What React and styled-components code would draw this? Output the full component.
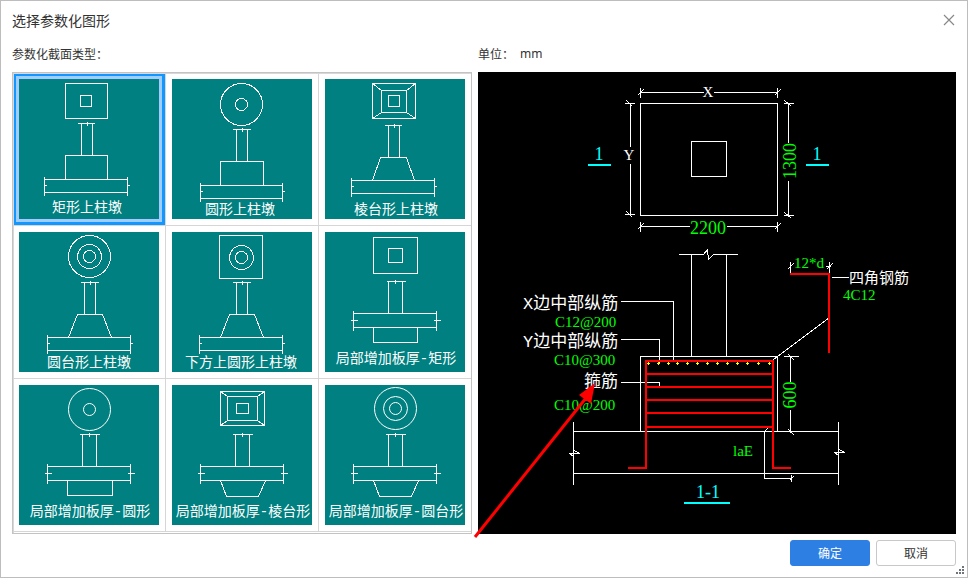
import React, { useState } from "react";
import styled, { createGlobalStyle } from "styled-components";

const GlobalStyle = createGlobalStyle`
  body {
    margin: 0;
    background: #fff;
    font-family: "Noto Sans", "Noto Sans CJK SC", sans-serif;
    font-size: 12px;
    color: #333;
  }
  * {
    box-sizing: border-box;
  }
`;

/* every coordinate is a pixel of the 140 x 140 thumbnail */
const sections = [
  {
    name: "矩形上柱墩",
    rects: [[46, 4, 88, 39], [61, 16, 72, 27]],
    circles: [],
    column: { cap: [58, 75], x: [62, 73], y: [44, 76] },
    block: [46, 88, 88, 46, 76, 100],
    slab: [25, 108, 100, 113],
    text: [68, 133],
  },
  {
    name: "圆形上柱墩",
    rects: [],
    circles: [[69, 25, 21], [69, 25, 6]],
    column: { cap: [60, 78], x: [64, 75], y: [50, 82] },
    block: [48, 91, 91, 48, 82, 106],
    slab: [28, 110, 106, 119],
    text: [68, 135],
  },
  {
    name: "棱台形上柱墩",
    rects: [[47, 4, 90, 39], [56, 11, 81, 33], [63, 16, 74, 27]],
    circles: [],
    slopes: true,
    column: { cap: [59, 76], x: [63, 74], y: [46, 78] },
    block: [55, 81, 89, 47, 78, 101],
    slab: [26, 109, 101, 114],
    text: [71, 135],
  },
  {
    name: "圆台形上柱墩",
    rects: [],
    circles: [[70, 24, 21], [70, 24, 12], [70, 24, 6]],
    column: { cap: [61, 79], x: [65, 76], y: [50, 82] },
    block: [58, 83, 92, 49, 82, 105],
    slab: [28, 111, 105, 118],
    text: [70, 135],
  },
  {
    name: "下方上圆形上柱墩",
    rects: [[47, 3, 90, 46]],
    circles: [[69, 25, 12], [69, 25, 6]],
    column: { cap: [60, 78], x: [64, 75], y: [50, 82] },
    block: [57, 82, 91, 48, 82, 105],
    slab: [27, 110, 105, 118],
    text: [69, 135],
  },
  {
    name: "局部增加板厚-矩形",
    rects: [[48, 5, 92, 41], [63, 16, 77, 30]],
    circles: [],
    column: { cap: [61, 80], x: [63, 77], y: [49, 81] },
    block: [48, 92, 92, 48, 95, 110],
    slab: [28, 111, 81, 95],
    text: [71, 131],
  },
  {
    name: "局部增加板厚-圆形",
    rects: [],
    circles: [[70, 24, 21], [70, 24, 6]],
    smooth: true,
    column: { cap: [60, 80], x: [63, 77], y: [49, 81] },
    block: [48, 93, 93, 48, 95, 110],
    slab: [28, 111, 81, 95],
    text: [71, 131],
  },
  {
    name: "局部增加板厚-棱台形",
    rects: [[48, 6, 92, 40], [55, 11, 85, 35], [64, 18, 76, 28]],
    circles: [],
    slopes: true,
    column: { cap: [60, 80], x: [63, 77], y: [49, 81] },
    block: [48, 93, 86, 54, 95, 111],
    slab: [28, 111, 81, 95],
    text: [71, 131],
  },
  {
    name: "局部增加板厚-圆台形",
    rects: [],
    circles: [[70, 23, 21], [70, 23, 12], [70, 23, 6]],
    smooth: true,
    column: { cap: [60, 80], x: [63, 77], y: [49, 81] },
    block: [48, 93, 86, 54, 95, 111],
    slab: [28, 111, 81, 95],
    text: [71, 131],
  },
];

const SectionThumb = ({ section }) => {
  const { name, rects, circles, slopes, smooth, column, block, slab, text } = section;
  const [bx1, bx2, bx3, bx4, by1, by2] = block;
  const [sx1, sx2, sy1, sy2] = slab;
  const [outer, middle] = rects;
  const mid = Math.round((column.x[0] + column.x[1]) / 2);
  const sMid = Math.floor((sy1 + sy2) / 2);
  const arm = by1 > sy1 ? 3 : 1;

  return (
    <Thumb viewBox="0 0 140 140">
      <g transform="translate(.5 .5)" shapeRendering="crispEdges">
        {rects.map(([x1, y1, x2, y2]) => (
          <path key={x1} d={`M${x1} ${y1}H${x2}V${y2}H${x1}Z`} />
        ))}
        {slopes && (
          <path
            d={`M${outer[0]} ${outer[1]}L${middle[0]} ${middle[1]}
              M${outer[2]} ${outer[1]}L${middle[2]} ${middle[1]}
              M${outer[0]} ${outer[3]}L${middle[0]} ${middle[3]}
              M${outer[2]} ${outer[3]}L${middle[2]} ${middle[3]}`}
          />
        )}
        {circles.map(([cx, cy, r]) => (
          <circle
            key={r}
            cx={cx}
            cy={cy}
            r={r}
            shapeRendering={smooth ? "auto" : "crispEdges"}
          />
        ))}
        <path
          d={`M${column.cap[0]} ${column.y[0]}H${column.cap[1]}
            M${column.x[0]} ${column.y[0]}V${column.y[1]}
            M${column.x[1]} ${column.y[0]}V${column.y[1]}
            M${mid} ${column.y[0] - 2}V${column.y[0] + 2}`}
        />
        <path d={`M${bx1} ${by1}H${bx2}L${bx3} ${by2}H${bx4}Z`} />
        <path
          d={`M${sx1} ${sy1}H${sx2}M${sx1} ${sy2}H${sx2}
            M${sx1} ${sy1 - 3}V${sy2 + 3}M${sx2} ${sy1 - 3}V${sy2 + 3}
            M${sx1 - arm} ${sMid}H${sx1 + arm + 1}
            M${sx2 - arm} ${sMid}H${sx2 + arm + 1}`}
        />
      </g>
      <text x={text[0]} y={text[1]} textAnchor="middle">
        {name}
      </text>
    </Thumb>
  );
};

const barDots = [648, 658, 668, 677, 687, 697, 707, 717, 727, 737, 747, 758, 769];
const stirrups = [374, 387, 400, 413, 427];

/* the detail drawing keeps the coordinates of the dialog */
const DetailDrawing = () => (
  <Drawing viewBox="478 72 478 462">
    <g className="white" transform="translate(.5 .5)" shapeRendering="crispEdges">
      {/* plan */}
      <path d="M640 103H777V215H640ZM691 141H726V176H691Z" />
      <path d="M640 92H703M713 92H777M640 87V97M777 87V97M637 95L643 89M774 95L780 89" />
      <path d="M640 226H689M726 226H777M640 221V231M777 221V231M637 229L643 223M774 229L780 223" />
      <path d="M630 103V146M630 163V214M624 103H634M624 214H634M626 100L632 106M626 211L632 217" />
      <path d="M788 103V142M788 180V215M783 103H793M783 215H793M784 100L791 106M784 212L791 218" />
      {/* section */}
      <path d="M678 254H703L707 249L708 259L713 254H737M691 254V356M726 254V356" />
      <path d="M640 431V356H777V431" />
      <path d="M573 431H838M573 473H838M573 421V484M838 421V484" />
      <path d="M569 453H579L574 450M569 453L573 456M834 452H844L839 449M834 452L838 455" />
      <path d="M620 301H673V361M620 339H659V362M620 382H659V386" />
      <path d="M790 261V272M829 261V272M787 269L793 263M826 269L832 263M825 266H830" />
      <path d="M831 277H848M829 317L769 362" />
      <path d="M783 356H798M790 356V381M790 409V432M788 354L794 360M788 429L794 435" />
      <path d="M764 431V478H791M791 474V481M763 432L767 428M789 480L793 476" />
    </g>

    <g className="rebar" shapeRendering="crispEdges">
      <path d="M628 468H646V361H773V468H791" />
      {stirrups.map((y) => (
        <path key={y} d={`M646 ${y}H773`} />
      ))}
      <path d="M790 274H829V353" />
    </g>
    <g className="dots" shapeRendering="crispEdges">
      {barDots.map((x) => (
        <path key={x} d={`M${x - 1} 363.5h3M${x + 0.5} 362v3`} />
      ))}
    </g>
    <path className="mark" d="M588 165H611M806 165H829M684 503H730" />

    <g className="label">
      <text x="708" y="97" fontSize="15" textAnchor="middle">X</text>
      <text x="629" y="160" fontSize="15" textAnchor="middle">Y</text>
      <text className="note" x="523" y="309" fontSize="17">X边中部纵筋</text>
      <text className="note" x="523" y="347" fontSize="17">Y边中部纵筋</text>
      <text className="note" x="584" y="387" fontSize="17">箍筋</text>
      <text className="note" x="849" y="283" fontSize="15">四角钢筋</text>
    </g>
    <g className="value">
      <text x="708" y="234" fontSize="18" textAnchor="middle">2200</text>
      <text transform="translate(796 161) rotate(-90)" fontSize="18" textAnchor="middle">1300</text>
      <text transform="translate(796 395) rotate(-90)" fontSize="18" textAnchor="middle">600</text>
      <text x="555" y="327" fontSize="15">C12@200</text>
      <text x="554" y="365" fontSize="15">C10@300</text>
      <text x="554" y="410" fontSize="15">C10@200</text>
      <text x="809" y="268" fontSize="15" textAnchor="middle">12*d</text>
      <text x="843" y="300" fontSize="15">4C12</text>
      <text x="733" y="456" fontSize="15">laE</text>
    </g>
    <g className="section-no">
      <text x="599" y="160" fontSize="18" textAnchor="middle">1</text>
      <text x="817" y="160" fontSize="18" textAnchor="middle">1</text>
      <text x="708" y="498" fontSize="18" textAnchor="middle">1-1</text>
    </g>

    <path d="M475 537L586 398" stroke="#f00" strokeWidth="3" />
    <path d="M595 383L579 395L591 404Z" fill="#f00" />
  </Drawing>
);

const App = () => {
  const [selected, setSelected] = useState(0);

  return (
    <>
      <GlobalStyle />
      <Dialog>
        <TitleBar>
          <h1>选择参数化图形</h1>
          <CloseButton type="button" aria-label="关闭">
            <svg width="12" height="12" viewBox="0 0 12 12">
              <path d="M1 1L11 11M11 1L1 11" stroke="#888" strokeWidth="1.2" />
            </svg>
          </CloseButton>
        </TitleBar>
        <Body>
          <Column>
            <Caption>参数化截面类型：</Caption>
            <SectionList>
              {sections.map((section, i) => (
                <SectionButton
                  key={section.name}
                  type="button"
                  aria-pressed={i === selected}
                  $selected={i === selected}
                  onClick={() => setSelected(i)}
                >
                  <SectionThumb section={section} />
                </SectionButton>
              ))}
            </SectionList>
          </Column>
          <Column $grow>
            <Caption>
              单位：<span>mm</span>
            </Caption>
            <Preview>
              <DetailDrawing />
            </Preview>
          </Column>
        </Body>
        <Footer>
          <FooterButton type="button" $primary>
            确定
          </FooterButton>
          <FooterButton type="button">取消</FooterButton>
        </Footer>
        <Grip viewBox="0 0 8 8">
          <path d="M6 0h2v2h-2zM3 3h2v2h-2zM6 3h2v2h-2zM0 6h2v2h-2zM3 6h2v2h-2zM6 6h2v2h-2z" />
        </Grip>
      </Dialog>
    </>
  );
};

const Dialog = styled.div`
  position: relative;
  min-height: 100vh;
  padding: 0 11px 11px;
  border: 1px solid #bdbdbd;
  background: #fff;
`;

const TitleBar = styled.header`
  display: flex;
  align-items: center;
  justify-content: space-between;
  height: 38px;
  padding-right: 1px;

  h1 {
    margin: 0;
    font-size: 14px;
    font-weight: 400;
  }
`;

const CloseButton = styled.button`
  display: flex;
  padding: 0;
  border: none;
  background: none;
`;

const Body = styled.div`
  display: flex;
  gap: 6px;
`;

const Column = styled.div`
  display: flex;
  flex-direction: column;
  flex: ${(props) => (props.$grow ? "1" : "none")};
  min-width: 0;
`;

const Caption = styled.div`
  display: flex;
  align-items: center;
  gap: 6px;
  height: 29px;
  margin-bottom: 4px;
`;

const SectionList = styled.div`
  display: grid;
  grid-template-columns: repeat(3, auto);
  padding-bottom: 1px;
  border: 1px solid #c3c3c3;
  box-shadow: inset 1px 1px 0 #d8d8d8;
`;

const SectionButton = styled.button`
  position: relative;
  display: block;
  padding: 6px;
  border: solid #d6d6d6;
  border-width: 0 1px 1px 0;
  background: none;

  &:nth-child(3n) {
    border-right: none;
  }

  &::before {
    content: "";
    display: ${(props) => (props.$selected ? "block" : "none")};
    position: absolute;
    inset: 1px 0 0 1px;
    border: solid #1296ff;
    border-width: 2px 3px 3px 2px;
    background: #a0ccff;
  }
`;

const Thumb = styled.svg`
  position: relative;
  display: block;
  width: 140px;
  height: 140px;
  background: #008080;

  path,
  circle {
    fill: none;
    stroke: #fff;
  }
  text {
    fill: #fff;
    font-family: "Liberation Mono", "Noto Sans CJK SC", monospace;
    font-size: 14px;
  }
`;

const Preview = styled.div`
  flex: 1;
  background: #000;
`;

const Drawing = styled.svg`
  display: block;
  width: 100%;
  height: 462px;
  overflow: visible;
  fill: none;
  font-family: "Liberation Serif", "Noto Sans CJK SC", serif;

  .white {
    stroke: #fff;
  }
  .rebar {
    stroke: #f00;
    stroke-width: 2px;
  }
  .dots {
    stroke: #ff0;
  }
  .mark {
    stroke: #0ff;
    stroke-width: 2px;
  }
  .label {
    fill: #fff;
  }
  .note {
    font-family: "Liberation Mono", "Noto Sans CJK SC", monospace;
  }
  .value {
    fill: #0f0;
  }
  .section-no {
    fill: #0ff;
  }
`;

const Footer = styled.footer`
  display: flex;
  justify-content: flex-end;
  gap: 6px;
  margin-top: 6px;
`;

const FooterButton = styled.button`
  width: 80px;
  height: 26px;
  padding: 0;
  border: 1px solid ${(props) => (props.$primary ? "#2d7fe3" : "#c8c8c8")};
  border-radius: 3px;
  background: ${(props) => (props.$primary ? "#2d7fe3" : "#fff")};
  color: ${(props) => (props.$primary ? "#fff" : "#333")};
  font-family: inherit;
  font-size: 12px;
`;

const Grip = styled.svg`
  position: absolute;
  right: 3px;
  bottom: 3px;
  width: 8px;
  height: 8px;
  fill: #6f757d;
`;

export default App;
